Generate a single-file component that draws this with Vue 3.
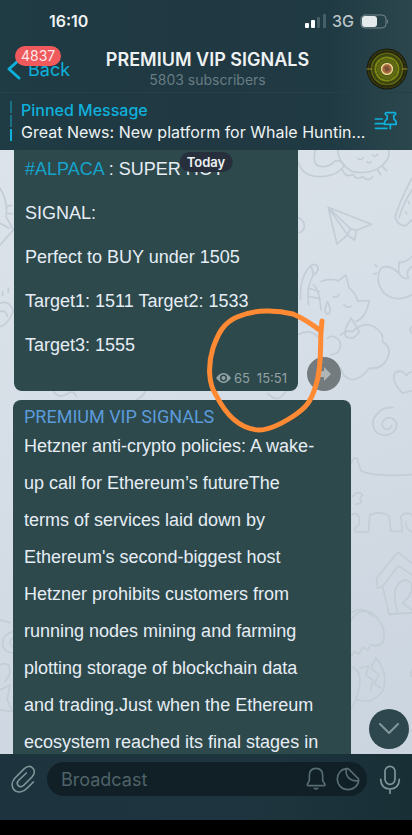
<template>
  <div class="app">
    <header class="header">
      <div class="status">
        <span class="time">16:10</span>
        <div class="status-right">
          <svg class="signal" viewBox="0 0 22 14" aria-hidden="true">
            <rect x="0" y="9" width="4" height="5" rx="1" fill="#fff" />
            <rect x="6" y="6" width="4" height="8" rx="1" fill="#fff" />
            <rect x="12" y="3" width="3" height="11" rx="1" fill="#476068" />
            <rect x="18" y="0" width="3" height="14" rx="1" fill="#476068" />
          </svg>
          <span class="network">3G</span>
          <svg class="battery" viewBox="0 0 29 15" aria-hidden="true">
            <rect x="1" y="1" width="25" height="13" rx="4" fill="none" stroke="#72858b" />
            <rect x="2" y="2" width="15" height="11" rx="3" fill="#e4e9eb" />
            <path d="M27 5 Q29 7.500 27 10 Z" fill="#72858b" />
          </svg>
        </div>
      </div>

      <div class="nav">
        <button class="back" type="button">
          <svg class="chevron" viewBox="0 0 14 22" aria-hidden="true">
            <path d="M12 2 L2 11 L12 20" />
          </svg>
          <span>Back</span>
          <span class="badge">4837</span>
        </button>
        <div class="heading">
          <h1>PREMIUM VIP SIGNALS</h1>
          <p>5803 subscribers</p>
        </div>
        <svg class="avatar" viewBox="0 0 42 42" role="img" aria-label="Channel">
          <circle cx="21" cy="21" r="20.500" fill="#181b10" />
          <circle cx="21" cy="21" r="18.500" fill="none" stroke="#34370f" stroke-width="2" stroke-dasharray="5 2" />
          <circle cx="21" cy="21" r="15.500" fill="none" stroke="#5d6411" stroke-width="2" />
          <circle cx="21" cy="21" r="13" fill="none" stroke="#3f4710" stroke-width="3" />
          <circle cx="21" cy="21" r="11.500" fill="none" stroke="#808a16" stroke-width="2" stroke-dasharray="14 2" />
          <circle cx="21" cy="21" r="8.500" fill="none" stroke="#5f6912" stroke-width="4" />
          <path d="M1 21 H6 M36 21 H41" stroke="#9a8a2c" />
          <circle cx="21" cy="21" r="5.500" fill="#a5683c" stroke="#e6d68c" stroke-width="1.500" />
          <path d="M18 19 L22 18 L24 22 L20 24 Z" fill="#7a5136" />
        </svg>
      </div>

      <div class="pinned">
        <div class="pin-bars"><i></i><i></i><i class="on"></i></div>
        <div class="pin-text">
          <strong>Pinned Message</strong>
          <p>Great News: New platform for Whale Huntin...</p>
        </div>
        <button class="pin-button" type="button" aria-label="Pinned messages">
          <svg viewBox="504 333 72 60" aria-hidden="true">
            <path d="M508 357 H529 M508 371 H533 M508 385 H543 M553 374 V386" />
            <path d="M541 338 H566 Q570 338 569 343 L563 347 L564 358 Q571 362 571 373 H535 Q535 362 543 358 L544 347 L538 343 Q537 338 541 338 Z" />
          </svg>
        </button>
      </div>
    </header>

    <main class="chat">
      <svg class="doodles" viewBox="0 0 412 604" preserveAspectRatio="xMaxYMin slice" aria-hidden="true">
        <g transform="translate(206 -5) scale(0.333)">
          <path d="M276 50 Q290 96 345 95 Q400 92 415 60 Q400 40 385 50 Q365 72 335 62 Q320 50 328 15" />
          <path d="M395 15 Q400 60 440 80 Q500 90 530 60 Q555 40 548 15 M455 40 Q465 48 472 38 M500 30 Q508 38 516 28 M484 50 Q490 58 496 50" />
          <path d="M410 75 Q420 100 440 88 Q455 108 470 95 Q490 112 500 95 M515 75 l10 15 M530 65 l12 12" />
          <path d="M367 187 L497 238 L452 256 L446 286 L425 270 L393 297 Z M367 187 L425 270 M367 187 L434 252 L452 256 M434 252 L425 270" />
          <path d="M618 100 Q585 160 568 215 Q572 240 600 243 L618 225 M618 135 Q590 180 580 218 M600 200 l3 6 M608 170 l3 6" />
          <path d="M618 450 Q570 475 535 445 Q505 410 525 370 Q550 355 578 385 L580 352 Q600 355 618 335 M580 385 Q590 405 608 400 Q598 378 618 365 M515 365 l-8 -6 M512 385 l-8 2" />
          <path d="M284 465 Q280 400 312 365 Q330 350 337 370 Q335 385 322 390 Q320 365 312 365 M322 390 Q300 430 308 480 M322 420 Q340 430 345 495 M310 430 L340 440 M310 455 L343 462" />
          <path d="M345 410 Q375 398 398 408 L420 390 L430 430 Q450 445 455 468 L490 467 Q480 520 450 530 M382 455 Q392 462 400 448 M414 480 Q424 492 436 484 M365 470 Q350 505 366 508 Q380 500 365 470 M436 520 Q410 560 420 575 Q445 590 460 560 Z" />
          <path d="M276 570 Q310 550 335 575 M365 580 Q385 565 402 590 Q410 625 375 630 M405 570 Q420 555 440 560 Q480 525 510 550 Q535 565 530 590 Q560 610 545 640 Q530 675 490 670 Q470 700 440 705 Q410 700 405 670" />
          <path d="M590 745 Q555 710 567 685 Q585 670 602 692 Q610 680 618 682 M590 745 L618 738 M276 218 Q297 225 295 248 Q290 265 276 262" />
          <path d="M618 545 Q608 555 618 565 M185 745 Q215 780 240 740" />
        </g>
        <g transform="translate(206 250) scale(0.333)">
          <path d="M562 22 Q520 20 502 60 Q497 105 540 106 Q573 100 573 72 Q565 48 540 55 Q520 72 535 86 Q552 92 558 76" />
          <path d="M436 190 Q445 165 455 178 L465 212 Q500 232 618 224 M440 290 Q455 270 470 285 L462 297 Q475 310 450 313" />
          <path d="M436 345 Q465 330 460 375 Q440 385 450 396 H488 L492 345 Q525 332 550 348 L555 395 H590 L585 350 Q600 332 618 345 M600 365 Q600 390 618 396" />
          <path d="M618 490 L576 457 L512 535 L515 565 L530 560 L550 642 L618 640 M530 560 L578 498 L618 525 M575 640 Q550 550 600 540 Q630 550 610 590 L590 610 L618 630 M436 640 Q470 615 500 650" />
        </g>
        <g transform="translate(206 460) scale(0.333)">
          <path d="M436 30 Q460 -10 500 10 Q545 50 532 95 Q515 115 495 103 L486 120 L470 112 L460 132 L445 125 L436 138" />
          <path d="M436 170 Q465 180 462 220 Q455 270 436 295 M462 175 L488 168 L480 195 L500 210 L495 240 M510 143 Q550 190 530 245 Q500 285 455 270 M510 143 L495 175 L520 195 L505 220 L525 235" />
          <path d="M545 -5 L550 14 L618 8 M618 180 Q610 190 618 200 M618 360 Q590 375 575 420" />
        </g>
        <g transform="translate(0 -5) scale(0.333)">
          <path d="M0 130 Q25 170 18 215 L40 255 L0 300 M0 235 L28 250 M20 185 l14 -4 M20 205 l16 2 M0 475 Q30 465 40 500 Q20 545 0 545 M0 500 Q20 495 22 515 M8 440 v12 M25 430 v12" />
          <path d="M160 740 Q180 765 205 745 Q220 735 230 755 M410 765 Q430 755 436 740" />
        </g>
        <g transform="translate(0 460) scale(0.333)">
          <path d="M0 30 l30 8 M38 65 Q5 75 8 105 Q15 130 38 128 M38 85 Q22 95 38 112 M0 165 Q35 150 28 195 L15 215 M0 240 L30 225 L22 270 L38 305 L0 300" />
        </g>
      </svg>

      <div class="row">
        <article class="bubble signal-post">
          <p><a href="#alpaca">#ALPACA</a> : SUPER HOT</p>
          <p v-for="line in signalLines" :key="line">{{ line }}</p>
          <footer class="meta">
            <svg viewBox="0 0 15 10" aria-hidden="true">
              <path fill-rule="evenodd" d="M0 5 Q7.500 -5 15 5 Q7.500 15 0 5 Z M7.500 1.500 A3.500 3.500 0 1 0 7.500 8.500 A3.500 3.500 0 1 0 7.500 1.500 Z" />
              <circle cx="7.500" cy="5" r="2" />
            </svg>
            <span>65</span>
            <time>15:51</time>
          </footer>
        </article>
        <button class="share" type="button" aria-label="Share">
          <svg viewBox="0 0 16 14" aria-hidden="true">
            <path d="M1 4 H8 V0 L15 7 L8 14 V10 H1 Z" />
          </svg>
        </button>
      </div>

      <article class="bubble news-post">
        <h2>PREMIUM VIP SIGNALS</h2>
        <p>{{ news }}</p>
      </article>

      <span class="day">Today</span>

      <svg class="marker" viewBox="0 0 120 128" aria-hidden="true">
        <path d="M116 14 L115 25 C114 40 116 60 110 78 C105 95 100 101 86 110 C75 117 64 123 53 123 C34 122 20 108 10 88 C2 76 2 57 7 41 C12 27 17 16 31 10 C49 2 71 3 87 7 C99 12 107 18 115 24" />
      </svg>

      <button class="scroll-down" type="button" aria-label="Scroll to bottom">
        <svg viewBox="0 0 22 12" aria-hidden="true">
          <path d="M2 1 L11 10 L20 1" />
        </svg>
      </button>
    </main>

    <form class="composer" @submit.prevent>
      <button class="icon-button" type="button" aria-label="Attach">
        <svg class="clip" viewBox="34 463 72 84" aria-hidden="true">
          <path d="M101 514 L83 532 C70 546 52 548 43 537 C34 526 37 512 46 502 L74 474 C82 466 93 465 99 472 C106 479 105 490 97 499 L73 523 C68 528 60 530 56 525 C51 520 53 513 58 508 L80 487" />
        </svg>
      </button>
      <div class="field">
        <input v-model="draft" type="text" placeholder="Broadcast" aria-label="Broadcast" />
        <button class="icon-button" type="button" aria-label="Notifications">
          <svg class="bell" viewBox="298 471 60 72" aria-hidden="true">
            <path d="M308 512 V497 C308 483 316 475 328 475 C340 475 348 483 348 497 V512 L354 521 Q357 527 350 527 H306 Q300 527 303 521 Z" />
            <path class="solid" d="M319 533 H337 Q334 539 328 539 Q322 539 319 533 Z" />
          </svg>
        </button>
        <button class="icon-button" type="button" aria-label="Stickers">
          <svg class="sticker" viewBox="390 469 72 72" aria-hidden="true">
            <path d="M424 474 C406 474 394 488 394 505 C394 523 408 537 426 537 C444 537 458 523 458 508 Q458 505 456 503 L429 476 Q427 474 424 474 Z" />
            <path d="M421 474 C417 497 431 513 457 510" />
          </svg>
        </button>
      </div>
      <button class="icon-button" type="button" aria-label="Record voice">
        <svg class="mic" viewBox="521 463 66 87" aria-hidden="true">
          <rect x="539" y="467" width="30" height="54" rx="15" />
          <path d="M526 506 C527 525 538 535 554 535 C570 535 581 525 582 506 M554 535 V548" />
        </svg>
      </button>
    </form>
  </div>
</template>

<script setup>
import { ref } from 'vue'

const draft = ref('')

const signalLines = [
  'SIGNAL:',
  'Perfect to BUY under 1505',
  'Target1: 1511 Target2: 1533',
  'Target3: 1555',
]

const news =
  "Hetzner anti-crypto policies: A wake-up call for Ethereum’s futureThe terms of services laid down by Ethereum's second-biggest host Hetzner prohibits customers from running nodes mining and farming plotting storage of blockchain data and trading.Just when the Ethereum ecosystem reached its final stages in"
</script>

<style>
body {
  margin: 0;
  background: #000;
}
</style>

<style scoped>
.app {
  display: flex;
  flex-direction: column;
  box-sizing: border-box;
  height: 100vh;
  padding-bottom: 15px;
  background: #000;
  font-family: Inter, "Liberation Sans", sans-serif;
}

h1,
h2,
p {
  margin: 0;
  font-weight: 400;
}

button {
  padding: 0;
  border: none;
  background: none;
  font-family: inherit;
  cursor: pointer;
}

svg {
  display: block;
  fill: none;
  stroke-linecap: round;
  stroke-linejoin: round;
}

.header {
  flex: none;
  background: linear-gradient(90deg, #1f3b43 0%, #203842 50%, #203a43 80%, #2b474d 100%);
  color: #eef2f3;
}

.status {
  display: flex;
  justify-content: space-between;
  align-items: center;
  height: 42px;
  padding: 0 23px 0 49px;
}

.time {
  font-size: 16px;
  font-weight: 600;
}

.status-right {
  display: flex;
  align-items: center;
  gap: 5px;
}

.signal {
  width: 22px;
  height: 14px;
}

.network {
  color: #b9c4c8;
  font-size: 16px;
  font-weight: 500;
}

.battery {
  width: 29px;
  height: 15px;
  margin-left: 1px;
}

.nav {
  display: grid;
  grid-template-columns: 1fr auto 1fr;
  align-items: center;
  height: 51px;
  padding: 4px 4px 0 7px;
  border-bottom: 1px solid #263f48;
  box-sizing: border-box;
}

.back {
  position: relative;
  justify-self: start;
  display: flex;
  align-items: center;
  gap: 7px;
  color: #0fb0dc;
  font-size: 18px;
}

.chevron {
  width: 14px;
  height: 22px;
  stroke: #0fb0dc;
  stroke-width: 3;
}

.badge {
  position: absolute;
  left: 8px;
  top: -12px;
  padding: 0 6px;
  border-radius: 10px;
  background: #f05a5c;
  color: #fbe9e9;
  font-size: 14px;
  line-height: 20px;
}

.heading {
  text-align: center;
}

.heading h1 {
  font-size: 18px;
  font-weight: 600;
  line-height: 22px;
}

.heading p {
  color: #677c83;
  font-size: 14px;
  line-height: 18px;
}

.avatar {
  justify-self: end;
  width: 42px;
  height: 42px;
}

.pinned {
  display: flex;
  align-items: center;
  gap: 9px;
  box-sizing: border-box;
  height: 57px;
  padding: 0 14px 2px 10px;
}

.pin-bars {
  display: flex;
  flex-direction: column;
  gap: 2px;
}

.pin-bars i {
  width: 2px;
  height: 12px;
  background: #1b7286;
}

.pin-bars .on {
  background: #0fb0dc;
}

.pin-text {
  flex: 1;
  min-width: 0;
  font-size: 16px;
  line-height: 22px;
  white-space: nowrap;
}

.pin-text strong {
  color: #0fb0dc;
  font-weight: 500;
}

.pin-button svg {
  width: 24px;
  height: 20px;
  stroke: #0fb0dc;
  stroke-width: 5;
}

.chat {
  position: relative;
  flex: 1;
  min-height: 0;
  overflow: hidden;
  background: linear-gradient(160deg, #dce3ea 0%, #d5dde6 45%, #cbd5df 100%);
}

.doodles {
  position: absolute;
  left: 0;
  top: 0;
  width: 100%;
  height: 100%;
  stroke: #c3cdd5;
  stroke-width: 5;
}

.row {
  position: relative;
  display: flex;
  align-items: flex-end;
  gap: 9px;
  padding-left: 14px;
}

.bubble {
  box-sizing: border-box;
  background: #2d494c;
  color: #e6edf5;
  font-family: "Liberation Sans", Arial, sans-serif;
  font-size: 18px;
}

.signal-post {
  width: 284px;
  padding: 9px 11px 5px;
  border-radius: 0 0 8px 8px;
}

.signal-post p {
  margin-bottom: 24px;
  line-height: 20px;
}

.signal-post a {
  color: #16a3cb;
  text-decoration: none;
}

.meta {
  display: flex;
  justify-content: flex-end;
  align-items: center;
  gap: 3px;
  margin-top: -9px;
  color: #93a2a4;
  font-family: Inter, sans-serif;
  font-size: 13px;
  line-height: 16px;
}

.meta svg {
  width: 15px;
  height: 10px;
  fill: #93a2a4;
}

.meta time {
  margin-left: 4px;
}

.share {
  display: flex;
  justify-content: center;
  align-items: center;
  width: 34px;
  height: 34px;
  border-radius: 50%;
  background: #737b7e;
}

.share svg {
  width: 16px;
  height: 14px;
  fill: #b0b5b6;
}

.news-post {
  position: relative;
  width: 338px;
  margin: 9px 0 0 13px;
  padding: 6px 27px 6px 11px;
  border-radius: 8px;
}

.news-post h2 {
  color: #5b9bdb;
  font-family: Roboto, sans-serif;
  font-size: 18px;
  line-height: 22px;
}

.news-post p {
  line-height: 37px;
}

.day {
  position: absolute;
  left: 50%;
  top: 2px;
  padding: 0 7px;
  border-radius: 10px;
  background: #272f3d;
  color: #eef2f3;
  font-size: 13px;
  font-weight: 600;
  line-height: 20px;
  transform: translateX(-50%);
}

.marker {
  position: absolute;
  left: 206px;
  top: 157px;
  width: 120px;
  height: 128px;
  stroke: #ff8a33;
  stroke-width: 5;
  pointer-events: none;
}

.scroll-down {
  position: absolute;
  right: 3px;
  bottom: 5px;
  display: flex;
  justify-content: center;
  align-items: center;
  width: 40px;
  height: 40px;
  border-radius: 50%;
  background: #2e464d;
}

.scroll-down svg {
  width: 22px;
  height: 12px;
  stroke: #82979c;
  stroke-width: 2;
}

.composer {
  display: flex;
  flex: none;
  align-items: center;
  gap: 12px;
  padding: 8px 11px 24px 11px;
  background: linear-gradient(90deg, #1d333d 0%, #1e353f 60%, #192f36 100%);
}

.icon-button svg {
  stroke: #7d979b;
  stroke-width: 5;
}

.clip {
  width: 24px;
  height: 28px;
}

.field {
  display: flex;
  flex: 1;
  align-items: center;
  gap: 10px;
  min-width: 0;
  height: 34px;
  padding: 0 7px 0 14px;
  border-radius: 17px;
  background: #111f26;
}

.field input {
  flex: 1;
  min-width: 0;
  padding: 0;
  border: none;
  outline: none;
  background: none;
  color: #e6edf5;
  font-family: inherit;
  font-size: 18px;
}

.field input::placeholder {
  color: #4f6369;
  opacity: 1;
}

.field .icon-button svg {
  stroke: #566c71;
}

.field .solid {
  fill: #566c71;
  stroke: none;
}

.bell {
  width: 20px;
  height: 24px;
}

.sticker {
  width: 24px;
  height: 24px;
}

.mic {
  width: 22px;
  height: 29px;
}
</style>
